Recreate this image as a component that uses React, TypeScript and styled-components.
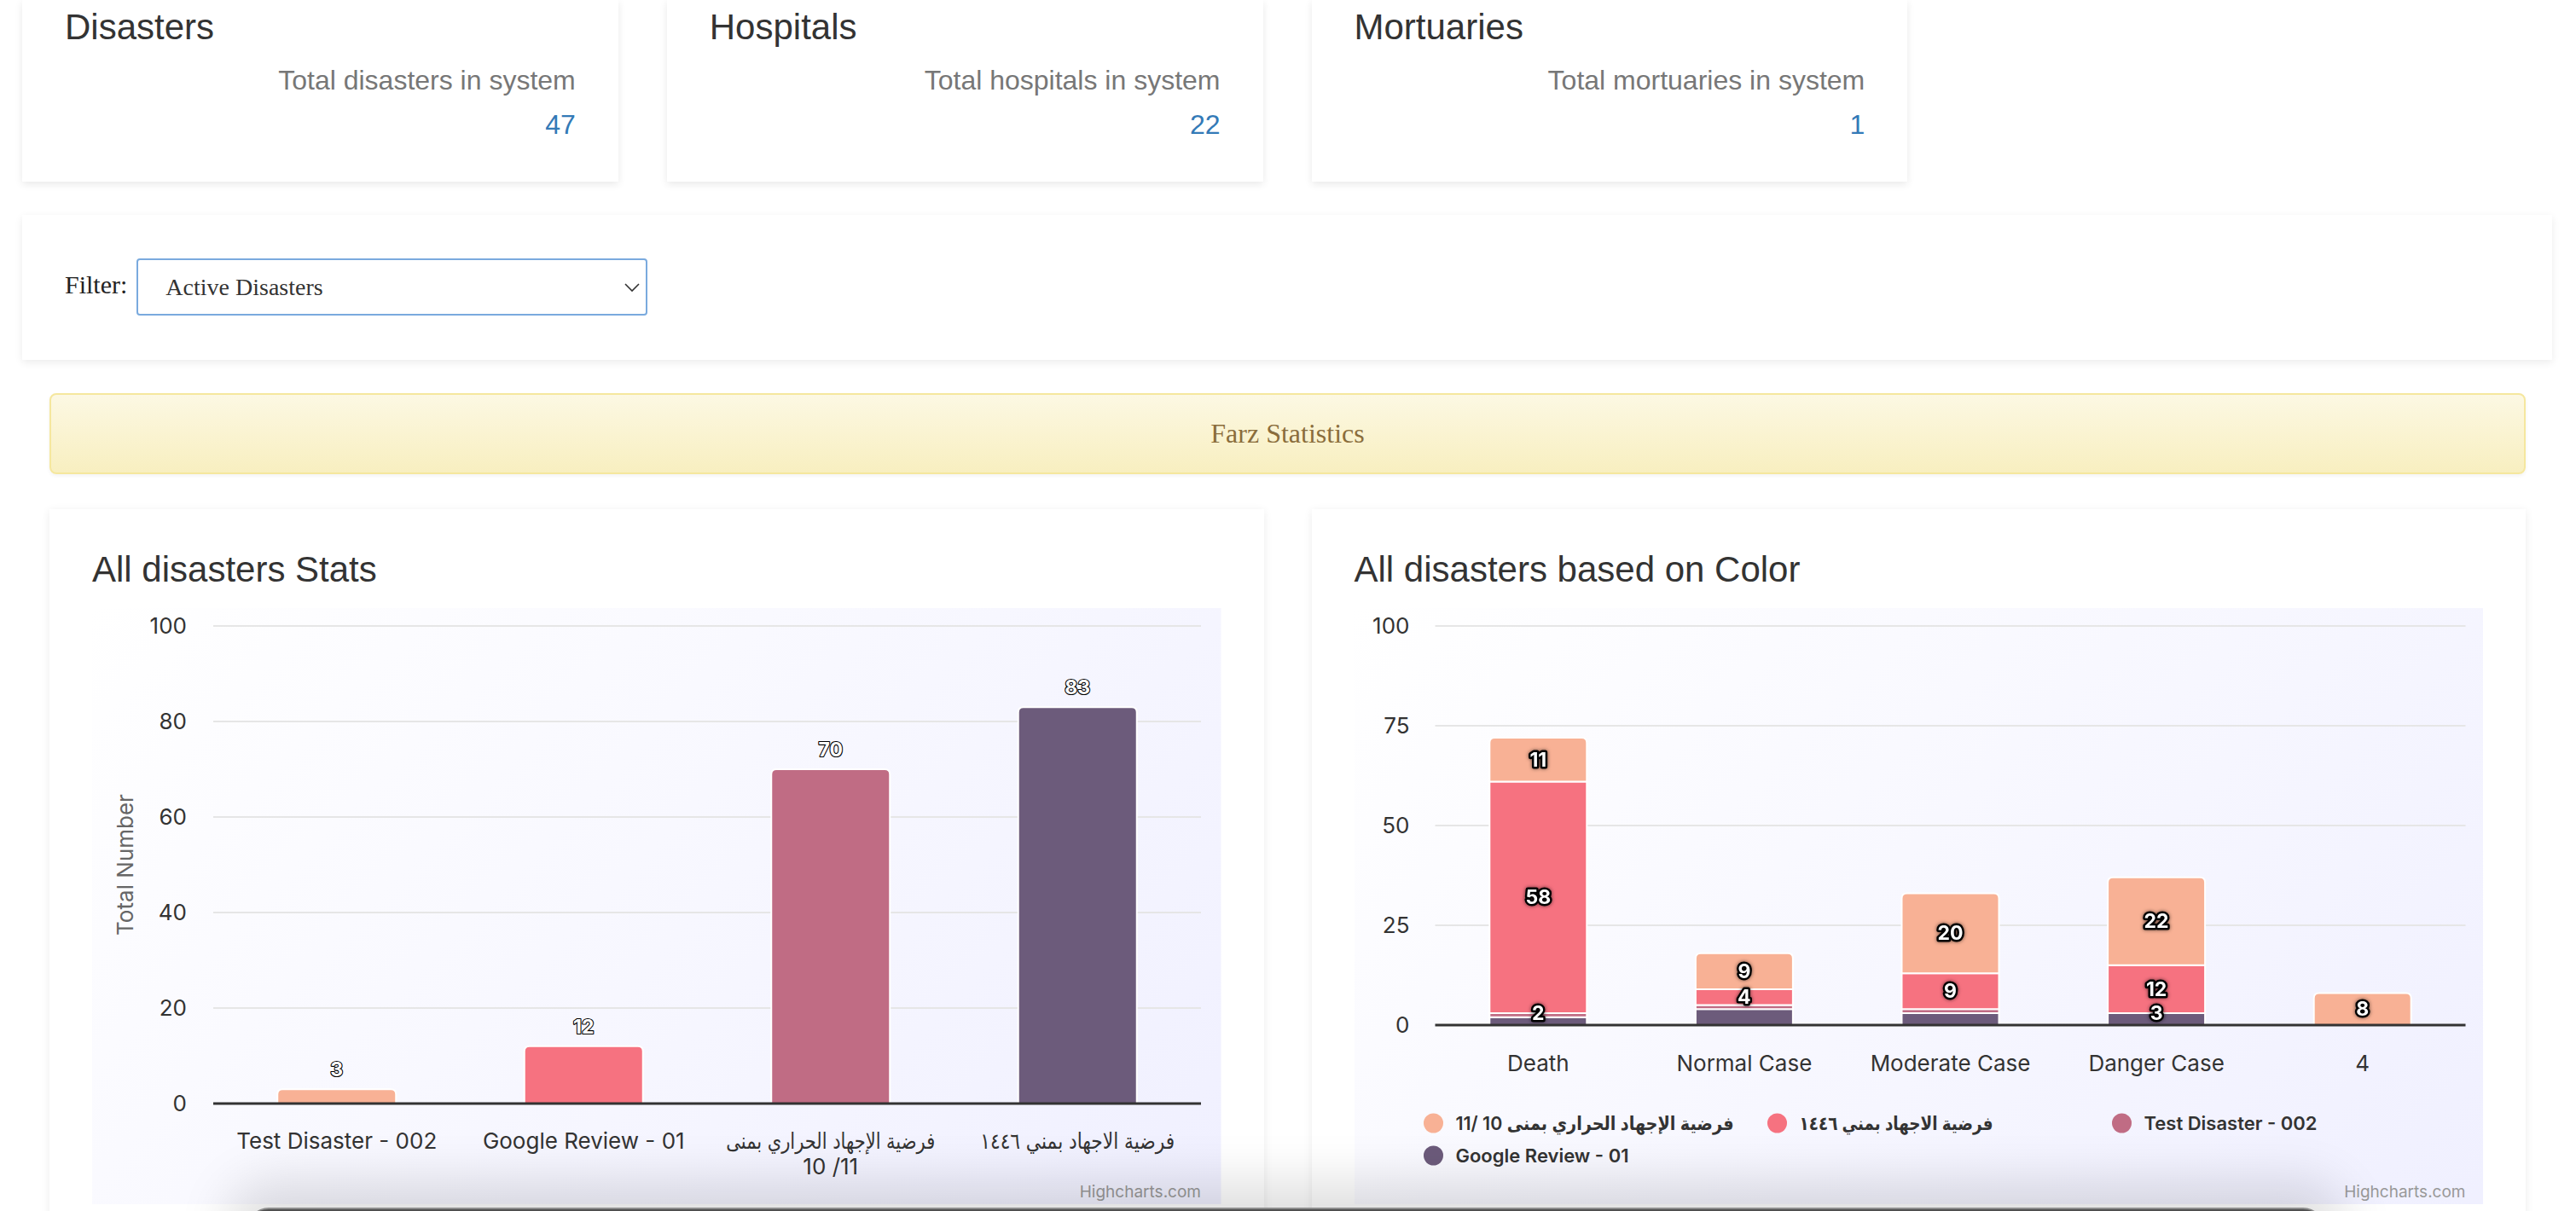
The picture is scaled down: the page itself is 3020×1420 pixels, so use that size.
import React from "react";
import styled, { createGlobalStyle } from "styled-components";

const GlobalStyle = createGlobalStyle`
  html, body { margin: 0; padding: 0; background: #fff; overflow: hidden; }
  body { font-family: "Liberation Sans", Arial, sans-serif; color: #333; }
  * { box-sizing: border-box; }
`;

const COLORS = {
  peach: "#f8b195",
  pink: "#f67280",
  mauve: "#c06c84",
  purple: "#6c5b7b",
};

const CHART_FONT = `Inter, "DejaVu Sans Condensed", "DejaVu Sans", "Noto Sans", sans-serif`;

/* ---------- page layout ---------- */
const Page = styled.div`
  width: 3020px;
  display: flex;
  flex-direction: column;
`;

const StatRow = styled.div`
  display: grid;
  grid-template-columns: repeat(4, 1fr);
  column-gap: 57px;
  padding: 0 28px 0 26px;
`;

const StatCard = styled.div`
  background: #fff;
  box-shadow: 0 3px 9px rgba(0, 0, 0, 0.09);
  padding: 9px 50px 44px 50px;
  display: flex;
  flex-direction: column;
`;

const StatTitle = styled.h3`
  margin: 0;
  font-size: 42px;
  line-height: 46px;
  font-weight: 400;
  color: #333;
`;

const StatLabel = styled.div`
  margin-top: 16px;
  font-size: 32px;
  line-height: 46px;
  color: #777;
  text-align: right;
`;

const StatValue = styled.div`
  margin-top: 6px;
  font-size: 32px;
  line-height: 46px;
  color: #337ab7;
  text-align: right;
`;

const FilterPanel = styled.div`
  margin: 39px 28px 0 26px;
  background: #fff;
  box-shadow: 0 3px 9px rgba(0, 0, 0, 0.08);
  padding: 51px 50px 52px;
  display: flex;
  align-items: center;
  gap: 11px;
`;

const FilterLabel = styled.span`
  font-family: "Liberation Serif", "Times New Roman", serif;
  font-size: 30px;
  color: #222;
  margin-bottom: 6px;
`;

const SelectBox = styled.div`
  width: 599px;
  height: 67px;
  border: 2px solid #7aaade;
  border-radius: 4px;
  display: flex;
  align-items: center;
  justify-content: space-between;
  padding: 0 6px 0 32px;
  font-family: "Liberation Serif", "Times New Roman", serif;
  font-size: 28px;
  color: #333;
  background: #fff;
`;

const Content = styled.div`
  padding: 0 59px 0 58px;
  display: flex;
  flex-direction: column;
`;

const Alert = styled.div`
  margin-top: 39px;
  height: 95px;
  border: 2px solid #f5e79e;
  border-radius: 8px;
  background: linear-gradient(to bottom, #fcf8e3 0%, #f8efc0 100%);
  color: #8a6d3b;
  font-family: "Liberation Serif", "Times New Roman", serif;
  font-size: 32px;
  display: flex;
  align-items: center;
  justify-content: center;
  box-shadow: 0 2px 4px rgba(0, 0, 0, 0.05);
`;

const ChartsRow = styled.div`
  margin-top: 41px;
  display: grid;
  grid-template-columns: 1fr 1fr;
  column-gap: 56px;
`;

const ChartPanel = styled.div`
  background: #fff;
  box-shadow: 0 2px 10px rgba(0, 0, 0, 0.08);
  padding: 48px 50px 40px;
  display: flex;
  flex-direction: column;
`;

const PanelTitle = styled.h3`
  margin: 0 0 22px;
  font-size: 42px;
  line-height: 46px;
  font-weight: 400;
  color: #333;
`;

const ChartBox = styled.div`
  height: 699px;
  width: 100%;
`;

const Dock = styled.div`
  position: fixed;
  left: 289px;
  width: 2437px;
  top: 1416px;
  height: 60px;
  background: #4f4f4f;
  border-top: 2px solid #8c8c8c;
  border-radius: 26px 26px 0 0;
  box-shadow: 0 -8px 60px 22px rgba(0, 0, 0, 0.13);
`;

/* ---------- svg chart text ---------- */
const AxisText = styled.text<{ $muted?: boolean }>`
  font-family: ${CHART_FONT};
  font-size: 26px;
  fill: ${(p) => (p.$muted ? "#666" : "#333")};
`;

const ValueText = styled.text<{ $heavy?: boolean }>`
  font-family: ${CHART_FONT};
  font-size: 23px;
  font-weight: 700;
  fill: #fff;
  stroke: #000;
  stroke-width: ${(p) => (p.$heavy ? 5 : 2.2)}px;
  stroke-linejoin: round;
  paint-order: stroke;
  ${(p) => (p.$heavy ? "filter: drop-shadow(0 0 2px rgba(0,0,0,0.6));" : "")}
`;

const LegendText = styled.text`
  font-family: ${CHART_FONT};
  font-size: 22px;
  font-weight: 600;
  fill: #333;
`;

const CreditText = styled.text`
  font-family: ${CHART_FONT};
  font-size: 19px;
  fill: #999;
`;

function roundedTop(x: number, y: number, w: number, h: number, r: number) {
  const rr = Math.max(0, Math.min(r, h / 2, w / 2));
  return `M${x},${y + h} L${x},${y + rr} Q${x},${y} ${x + rr},${y} L${x + w - rr},${y} Q${x + w},${y} ${x + w},${y + rr} L${x + w},${y + h} Z`;
}

function ChartBackground({ id }: { id: string }) {
  return (
    <>
      <defs>
        <linearGradient id={id} gradientUnits="userSpaceOnUse" x1="0" y1="0" x2="1000" y2="1000">
          <stop offset="0" stopColor="#ffffff" />
          <stop offset="1" stopColor="#f0f0ff" />
        </linearGradient>
      </defs>
      <rect x="0" y="0" width="100%" height="699" fill={`url(#${id})`} />
    </>
  );
}

/* ---------- left chart ---------- */
type Line = { t: string; w?: number };

function StatsChart() {
  const L = 142;
  const R = 1300;
  const T = 21;
  const B = 581;
  const unit = (B - T) / 100;
  const cw = (R - L) / 4;
  const bw = 139;
  const bars: { name: Line[]; v: number; c: string }[] = [
    { name: [{ t: "Test Disaster - 002" }], v: 3, c: COLORS.peach },
    { name: [{ t: "Google Review - 01" }], v: 12, c: COLORS.pink },
    { name: [{ t: "فرضية الإجهاد الحراري بمنى", w: 245 }, { t: "10 /11" }], v: 70, c: COLORS.mauve },
    { name: [{ t: "فرضية الاجهاد بمني ١٤٤٦", w: 228 }], v: 83, c: COLORS.purple },
  ];
  const ticks = [0, 20, 40, 60, 80, 100];
  return (
    <svg width="100%" height="699">
      <ChartBackground id="bgLeft" />
      {ticks.map((t) => {
        const y = B - t * unit;
        return (
          <g key={t}>
            {t > 0 && <line x1={L} x2={R} y1={y} y2={y} stroke="#e6e6e6" strokeWidth={2} />}
            <AxisText x={111} y={y + 9} textAnchor="end">
              {t}
            </AxisText>
          </g>
        );
      })}
      <AxisText $muted x={38} y={301} textAnchor="middle" dominantBaseline="central" transform="rotate(-90 38 301)">
        Total Number
      </AxisText>
      {bars.map((b, i) => {
        const cx = L + cw * (i + 0.5);
        const h = b.v * unit;
        const top = B - h;
        return (
          <g key={i}>
            <path d={roundedTop(cx - bw / 2, top, bw, h, 6)} fill={b.c} stroke="#fff" strokeWidth={2} />
            <ValueText x={cx} y={top - 15} textAnchor="middle">
              {b.v}
            </ValueText>
            {b.name.map((line, j) => (
              <AxisText
                key={j}
                x={cx}
                y={634 + j * 30}
                textAnchor="middle"
                textLength={line.w}
                lengthAdjust={line.w ? "spacingAndGlyphs" : undefined}
              >
                {line.t}
              </AxisText>
            ))}
          </g>
        );
      })}
      <line x1={L} x2={R} y1={B} y2={B} stroke="#333" strokeWidth={3} />
      <CreditText x={R} y={691} textAnchor="end">
        Highcharts.com
      </CreditText>
    </svg>
  );
}

/* ---------- right chart ---------- */
type Seg = { v: number; c: string; label?: boolean };

function ColorChart() {
  const L = 94.5;
  const R = 1302.5;
  const T = 21;
  const B = 489;
  const unit = (B - T) / 100;
  const cw = (R - L) / 5;
  const bw = 114;
  const cats: { name: string; segs: Seg[] }[] = [
    {
      name: "Death",
      segs: [
        { v: 2, c: COLORS.purple, label: true },
        { v: 1, c: COLORS.mauve },
        { v: 58, c: COLORS.pink, label: true },
        { v: 11, c: COLORS.peach, label: true },
      ],
    },
    {
      name: "Normal Case",
      segs: [
        { v: 4, c: COLORS.purple },
        { v: 1, c: COLORS.mauve },
        { v: 4, c: COLORS.pink, label: true },
        { v: 9, c: COLORS.peach, label: true },
      ],
    },
    {
      name: "Moderate Case",
      segs: [
        { v: 3, c: COLORS.purple },
        { v: 1, c: COLORS.mauve },
        { v: 9, c: COLORS.pink, label: true },
        { v: 20, c: COLORS.peach, label: true },
      ],
    },
    {
      name: "Danger Case",
      segs: [
        { v: 3, c: COLORS.purple, label: true },
        { v: 12, c: COLORS.pink, label: true },
        { v: 22, c: COLORS.peach, label: true },
      ],
    },
    { name: "4", segs: [{ v: 8, c: COLORS.peach, label: true }] },
  ];
  const ticks = [0, 25, 50, 75, 100];
  const legend = [
    { x: 92.5, y: 604, c: COLORS.peach, t: "\u202Bفرضية الإجهاد الحراري بمنى 10 /11\u202C", w: 326 },
    { x: 495.5, y: 604, c: COLORS.pink, t: "\u202Bفرضية الاجهاد بمني ١٤٤٦\u202C", w: 227 },
    { x: 899.5, y: 604, c: COLORS.mauve, t: "Test Disaster - 002" },
    { x: 92.5, y: 642, c: COLORS.purple, t: "Google Review - 01" },
  ];
  return (
    <svg width="100%" height="699">
      <ChartBackground id="bgRight" />
      {ticks.map((t) => {
        const y = B - t * unit;
        return (
          <g key={t}>
            {t > 0 && <line x1={L} x2={R} y1={y} y2={y} stroke="#e6e6e6" strokeWidth={2} />}
            <AxisText x={64.5} y={y + 9} textAnchor="end">
              {t}
            </AxisText>
          </g>
        );
      })}
      {cats.map((cat, i) => {
        const cx = L + cw * (i + 0.5);
        let acc = 0;
        const shapes: React.ReactNode[] = [];
        const labels: React.ReactNode[] = [];
        cat.segs.forEach((s, j) => {
          const y0 = B - acc * unit;
          acc += s.v;
          const y1 = B - acc * unit;
          const isTop = j === cat.segs.length - 1;
          shapes.push(
            <path
              key={j}
              d={roundedTop(cx - bw / 2, y1, bw, y0 - y1, isTop ? 6 : 0)}
              fill={s.c}
              stroke="#fff"
              strokeWidth={2}
            />
          );
          if (s.label) {
            const mid = Math.min((y0 + y1) / 2, B - 14);
            labels.push(
              <ValueText key={`l${j}`} $heavy x={cx} y={mid + 8} textAnchor="middle">
                {s.v}
              </ValueText>
            );
          }
        });
        return (
          <g key={cat.name}>
            {shapes}
            {labels}
            <AxisText x={cx} y={543} textAnchor="middle">
              {cat.name}
            </AxisText>
          </g>
        );
      })}
      <line x1={L} x2={R} y1={B} y2={B} stroke="#333" strokeWidth={3} />
      {legend.map((l, i) => (
        <g key={i}>
          <circle cx={l.x} cy={l.y} r={11.5} fill={l.c} />
          <LegendText
            x={l.x + 26}
            y={l.y + 8}
            textLength={l.w}
            lengthAdjust={l.w ? "spacingAndGlyphs" : undefined}
          >
            {l.t}
          </LegendText>
        </g>
      ))}
      <CreditText x={R} y={691} textAnchor="end">
        Highcharts.com
      </CreditText>
    </svg>
  );
}

function Chevron() {
  return (
    <svg width="20" height="12" viewBox="0 0 20 12">
      <polyline points="2,2 10,10 18,2" fill="none" stroke="#333" strokeWidth="1.6" />
    </svg>
  );
}

const stats = [
  { title: "Disasters", label: "Total disasters in system", value: 47 },
  { title: "Hospitals", label: "Total hospitals in system", value: 22 },
  { title: "Mortuaries", label: "Total mortuaries in system", value: 1 },
];

export default function App() {
  return (
    <>
      <GlobalStyle />
      <Page>
        <StatRow>
          {stats.map((s) => (
            <StatCard key={s.title}>
              <StatTitle>{s.title}</StatTitle>
              <StatLabel>{s.label}</StatLabel>
              <StatValue>{s.value}</StatValue>
            </StatCard>
          ))}
        </StatRow>
        <FilterPanel>
          <FilterLabel>Filter:</FilterLabel>
          <SelectBox>
            <span>Active Disasters</span>
            <Chevron />
          </SelectBox>
        </FilterPanel>
        <Content>
          <Alert>Farz Statistics</Alert>
          <ChartsRow>
            <ChartPanel>
              <PanelTitle>All disasters Stats</PanelTitle>
              <ChartBox>
                <StatsChart />
              </ChartBox>
            </ChartPanel>
            <ChartPanel>
              <PanelTitle>All disasters based on Color</PanelTitle>
              <ChartBox>
                <ColorChart />
              </ChartBox>
            </ChartPanel>
          </ChartsRow>
        </Content>
      </Page>
      <Dock />
    </>
  );
}
